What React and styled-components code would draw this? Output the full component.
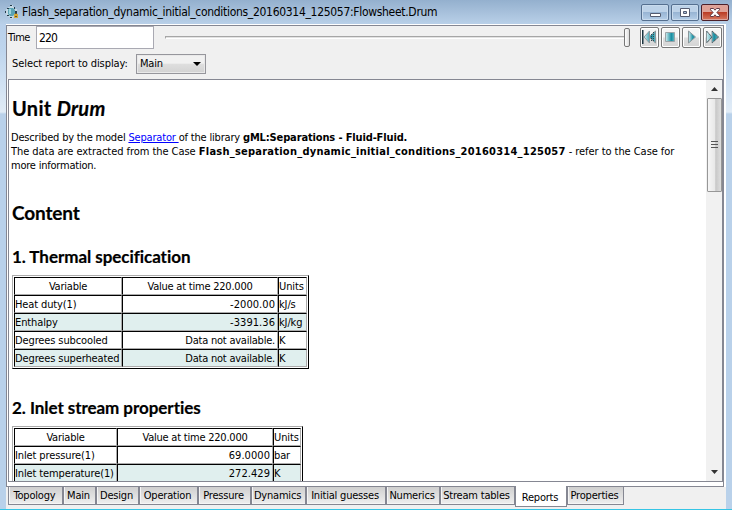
import React from "react";
import styled, { createGlobalStyle, css } from "styled-components";

const LINE = "#858792";

const GlobalStyle = createGlobalStyle`
  * { box-sizing: border-box; }
  body {
    margin: 0;
    overflow: hidden;
    color: #000;
    font: 11px/14px "DejaVu Sans Condensed", "DejaVu Sans", sans-serif;
    letter-spacing: -0.22px;
  }
`;

const Window = styled.main`
  width: 732px;
  height: 510px;
  display: flex;
  flex-direction: column;
  border-bottom: 1px solid #35c5e5;
  background: linear-gradient(#b9d0ea 0 25px, #bed5ed 50px, #e1ecf7 112px, #b9d1ea 114px, #b9d1ea);
`;

const TitleBar = styled.header`
  flex: 0 0 24px;
  display: flex;
  align-items: center;
  padding-left: 5px;
  padding-right: 3px;
  background: linear-gradient(#94b0ce, #b9d0e8);
`;

const Title = styled.h1`
  flex: 1;
  margin: 0 0 0 3px;
  font-size: 12px;
  font-weight: 400;
  line-height: 16px;
  letter-spacing: -0.3px;
  white-space: nowrap;
`;

const WindowButtons = styled.div`
  display: flex;
  gap: 2px;
  height: 17px;
`;

const WindowButton = styled.button`
  width: 28px;
  height: 17px;
  padding: 0;
  border: 1px solid ${(p) => (p.$close ? "#4c2029" : "#556f8f")};
  border-radius: 2px;
  box-shadow: inset 0 0 0 1px ${(p) => (p.$close ? "#dca49c" : "#c9dbed")};
  background: ${(p) =>
    p.$close
      ? "linear-gradient(#dfa196 0 45%, #bb3d26 50%, #d77961)"
      : "linear-gradient(#bdd2e8 0 45%, #98b5d4 50%, #b5cee8)"};
  svg { display: block; }
`;

const Body = styled.section`
  flex: 1;
  margin: 0 6px;
  display: flex;
  flex-direction: column;
  background: #f0f0f0;
  border-top: 1px solid #fff;
`;

const Pane = styled.div`
  width: 718px;
  height: 462px;
  display: flex;
  flex-direction: column;
  border: 1px solid ${LINE};
  box-shadow: 2px 0 #fff;
  background: #f0f0f0;
`;

const TimeRow = styled.div`
  flex: 0 0 23px;
  display: flex;
  padding-left: 1px;
`;

const TimeLabel = styled.label`
  width: 28px;
  line-height: 23px;
  letter-spacing: -0.6px;
`;

const TimeInput = styled.input`
  width: 118px;
  height: 23px;
  padding: 0 2px;
  border: 1px solid #a9a9b2;
  background: #fff;
  font: 12px "DejaVu Sans Condensed", sans-serif;
  letter-spacing: -0.9px;
`;

const Slider = styled.div`
  width: 465px;
  height: 20px;
  margin: 1px 10px 0 11px;
  display: flex;
  align-items: center;
`;

const Track = styled.div`
  flex: 1;
  height: 3px;
  margin-top: 1px;
  border-top: 1px solid #a6a6a6;
  border-left: 1px solid #a6a6a6;
  border-bottom: 1px solid #fff;
  background: #e2e2e2;
`;

const Thumb = styled.div`
  width: 6px;
  height: 19px;
  border: 1px solid #777;
  border-radius: 2px;
  background: linear-gradient(90deg, #fff, #ddd);
`;

const Transport = styled.div`
  display: flex;
  gap: 2px;
  padding-top: 1px;
`;

const TransportButton = styled.button`
  width: 19px;
  height: 21px;
  padding: 0;
  border: 1px solid #777;
  border-radius: 2px;
  box-shadow: inset 0 0 0 1px #fff;
  background: linear-gradient(#f5f5f5 0 45%, #dedede 55%, #d4d4d4);
  svg { display: block; }
`;

const SelectRow = styled.div`
  flex: 0 0 30px;
  display: flex;
  align-items: center;
  padding: 0 0 1px 5px;
`;

const SelectLabel = styled.span`
  width: 124px;
  padding-top: 1px;
  letter-spacing: -0.08px;
`;

const Combo = styled.div`
  width: 70px;
  height: 20px;
  padding: 1px 4px 0 3px;
  display: flex;
  align-items: center;
  justify-content: space-between;
  border: 1px solid #96969c;
  box-shadow: inset 0 0 0 1px #e9e9e9;
  background: linear-gradient(#f1f1f1 0 45%, #dedede 52%, #d2d2d2);
`;

const ReportFrame = styled.div`
  width: 715px;
  height: 403px;
  margin-left: 1px;
  display: flex;
  border: 1px solid ${LINE};
  background: #fff;
  box-shadow: -1px 0 #fff, 0 4px #fff, -1px 4px #fff;
`;

const Document = styled.article`
  flex: 1;
  padding-left: 2px;
  overflow: hidden;
`;

const UnitHeading = styled.h2`
  height: 51px;
  margin: 0;
  padding: 16px 0 0 1px;
  font: 700 20px/24px Lato, sans-serif;
  letter-spacing: 0.3px;
  -webkit-text-stroke: 0.2px;
`;

const ContentHeading = styled.h2`
  margin: 28px 0 0 1px;
  font: 700 19px/24px Lato, sans-serif;
  letter-spacing: -0.15px;
  -webkit-text-stroke: 0.2px;
`;

const SectionHeading = styled.h3`
  margin: ${(p) => p.$gap}px 0 6px 1px;
  font: 700 17px/24px Lato, sans-serif;
  letter-spacing: -0.05px;
  -webkit-text-stroke: 0.2px;
`;

const Paragraph = styled.p`
  margin: 0;
  white-space: nowrap;
  letter-spacing: ${(p) => p.$track}px;
`;

const Link = styled.a`
  color: #00f;
  text-decoration: underline;
`;

const Strong = styled.b`
  letter-spacing: ${(p) => p.$track}px;
`;

const Table = styled.div`
  width: max-content;
  margin-left: 1px;
  padding: 1px;
  border: 1px solid;
  border-color: #ababab #000 #000 #ababab;
`;

const Row = styled.div`
  display: grid;
  grid-template-columns: ${(p) => p.$columns};
  background: ${(p) => (p.$shaded ? "#e0efee" : "#fff")};
`;

const Cell = styled.div`
  height: 18px;
  line-height: 15px;
  padding-top: 1px;
  border: 1px solid;
  border-color: #000 #ababab #ababab #000;
  white-space: nowrap;
  letter-spacing: ${(p) => (p.$numeric ? 0.05 : p.$align ? -0.22 : -0.12)}px;
  text-align: ${(p) => p.$align || "left"};
  ${(p) => p.$align === "right" && css`padding-right: 2px;`}
`;

const Scrollbar = styled.div`
  width: 16px;
  display: flex;
  flex-direction: column;
  align-items: center;
  background: #f1f1f1;
`;

const Arrow = styled.div`
  height: 18px;
  display: flex;
  align-items: center;
`;

const ScrollThumb = styled.div`
  width: 15px;
  height: 94px;
  display: flex;
  align-items: center;
  justify-content: center;
  border: 1px solid #979797;
  border-radius: 1px;
  background: linear-gradient(90deg, #f6f6f6, #e9e9e9 50%, #c8c8c8 60%, #dedede);
`;

const ScrollSpace = styled.div`
  flex: 1;
`;

const Tabs = styled.nav`
  display: flex;
  align-items: flex-start;
  padding-left: 2px;
`;

const Tab = styled.button`
  width: ${(p) => p.$width}px;
  height: ${(p) => (p.$active ? 21 : 18)}px;
  margin-top: ${(p) => (p.$active ? -1 : 0)}px;
  padding: ${(p) => (p.$active ? "4px 2px 0 0" : "0 2px 0 0")};
  border: 1px solid ${LINE};
  border-top: 0;
  box-shadow: ${(p) => (p.$active ? "none" : "inset 1px -1px #f5f5f5")};
  background: ${(p) => (p.$active ? "#fff" : "linear-gradient(#cfcfcf, #d9d9d9 30%, #eee)")};
  color: #000;
  font: inherit;
  letter-spacing: -0.2px;
  white-space: nowrap;
`;

const AppIcon = () => (
  <svg width="14" height="14" viewBox="0 0 14 14">
    <path d="M1 4h2V2h2V0h3v2h2v2h2v5h-2v3H8v2H5v-2H3v-2H1V8H0V6h1z" fill="#c5d8e4" />
    <path d="M4 3h4l2 2v4l-2 2H5L3 9V5z" fill="#59a3b4" />
    <path d="M4 4h2v5H4z" fill="#9fd3dc" />
    <path d="M5 0h2v1H5zM2 3h2v1H2zM0 6h1v2H0zM2 10h2v1H2zM5 12h2v1H5zM9 2h1v2H9zM10 6h2v2h-2z" fill="#263c4b" />
    <path d="M9 9h4v4H9z" fill="#d5aa37" />
    <path d="M10 8h2v1h-2zM10 11h2v1h-2z" fill="#68532b" />
  </svg>
);

const windowGlyphs = {
  minimize: <path d="M8.5 8.5h10v3h-10z" fill="#fff" stroke="#555c70" />,
  maximize: (
    <g stroke="#555c70" fill="#fff">
      <path d="M8.5 3.5h9v8h-9z" />
      <path d="M11.5 6.5h3v2h-3z" fill="#a9c2de" />
    </g>
  ),
  close: (
    <path
      d="M8.5 3.5h3L13 5.2l1.5-1.7h3v1.3l-2.6 2.7 2.6 2.7v1.3h-3L13 9.8l-1.5 1.7h-3v-1.3l2.6-2.7-2.6-2.7z"
      fill="#fff"
      stroke="#633c48"
    />
  ),
};

const transportGlyphs = {
  first: (
    <g>
      <path d="M1 2h1.5v14H1z" fill="#19333f" />
      <path d="M8.5 3v12L3 9zM14.5 3v12L8 9z" fill="url(#teal)" stroke="#8c999f" />
      <path d="M10.5 6v7M12.5 4v10" stroke="#35474e" strokeDasharray="1 1" />
    </g>
  ),
  stop: <path d="M3.5 4.5h9v9h-9z" fill="url(#teal)" stroke="#9aa4a8" />,
  play: <path d="M5.5 3v12L12.5 9z" fill="url(#teal)" stroke="#8a969b" />,
  forward: (
    <g>
      <path d="M2.5 3v12L8 9zM8 3v12L14.5 9z" fill="url(#teal)" stroke="#8a969b" />
      <path d="M8 3 14.5 9 8 15M2.5 3 8 9l-5.5 6" fill="none" stroke="#35474e" strokeDasharray="1 1" />
    </g>
  ),
};

const TransportGlyph = ({ name }) => (
  <svg width="17" height="19" viewBox="0 0 17 19">
    <defs>
      <linearGradient id="teal">
        <stop stopColor="#d7f1f2" />
        <stop offset=".65" stopColor="#178da1" />
        <stop offset="1" stopColor="#64bac4" />
      </linearGradient>
    </defs>
    {transportGlyphs[name]}
  </svg>
);

const Triangle = ({ up, width = 7, color = "#333" }) => (
  <svg width={width} height="4" viewBox="0 0 8 4" preserveAspectRatio="none">
    <path d={up ? "M0 4 4 0l4 4z" : "M0 0h8L4 4z"} fill={color} />
  </svg>
);

const thermal = [
  ["Heat duty(1)", "-2000.00", "kJ/s"],
  ["Enthalpy", "-3391.36", "kJ/kg"],
  ["Degrees subcooled", "Data not available.", "K"],
  ["Degrees superheated", "Data not available.", "K"],
];

const inlet = [
  ["Inlet pressure(1)", "69.0000", "bar"],
  ["Inlet temperature(1)", "272.429", "K"],
];

const tabs = [
  ["Topology", 55],
  ["Main", 33],
  ["Design", 43],
  ["Operation", 59],
  ["Pressure", 53],
  ["Dynamics", 55],
  ["Initial guesses", 80],
  ["Numerics", 54],
  ["Stream tables", 75],
  ["Reports", 52],
  ["Properties", 57],
];

function ReportTable({ columns, rows }) {
  return (
    <Table>
      <Row $columns={columns}>
        <Cell $align="center">Variable</Cell>
        <Cell $align="center">Value at time 220.000</Cell>
        <Cell>Units</Cell>
      </Row>
      {rows.map(([name, value, unit], i) => (
        <Row key={name} $columns={columns} $shaded={i % 2 === 1}>
          <Cell>{name}</Cell>
          <Cell $align="right" $numeric={/\d/.test(value)}>{value}</Cell>
          <Cell>{unit}</Cell>
        </Row>
      ))}
    </Table>
  );
}

export default function App() {
  return (
    <Window>
      <GlobalStyle />
      <TitleBar>
        <AppIcon />
        <Title>Flash_separation_dynamic_initial_conditions_20160314_125057:Flowsheet.Drum</Title>
        <WindowButtons>
          {["minimize", "maximize", "close"].map((name) => (
            <WindowButton key={name} $close={name === "close"} aria-label={name}>
              <svg width="26" height="15" viewBox="0 0 26 15">{windowGlyphs[name]}</svg>
            </WindowButton>
          ))}
        </WindowButtons>
      </TitleBar>
      <Body>
        <Pane>
          <TimeRow>
            <TimeLabel htmlFor="time">Time</TimeLabel>
            <TimeInput id="time" defaultValue="220" />
            <Slider>
              <Track />
              <Thumb />
            </Slider>
            <Transport>
              {["first", "stop", "play", "forward"].map((name) => (
                <TransportButton key={name} aria-label={name}>
                  <TransportGlyph name={name} />
                </TransportButton>
              ))}
            </Transport>
          </TimeRow>
          <SelectRow>
            <SelectLabel>Select report to display:</SelectLabel>
            <Combo>
              Main
              <Triangle width={8} color="#000" />
            </Combo>
          </SelectRow>
          <ReportFrame>
            <Document>
              <UnitHeading>Unit <em>Drum</em></UnitHeading>
              <Paragraph $track={-0.18}>
                Described by the model <Link>Separator </Link>of the library{" "}
                <Strong $track={-0.14}>gML:Separations - Fluid-Fluid.</Strong>
              </Paragraph>
              <Paragraph $track={-0.05}>
                The data are extracted from the Case{" "}
                <Strong $track={0.24}>Flash_separation_dynamic_initial_conditions_20160314_125057</Strong> - refer to the Case for
              </Paragraph>
              <Paragraph $track={-0.22}>more information.</Paragraph>
              <ContentHeading>Content</ContentHeading>
              <SectionHeading $gap={20}>1. Thermal specification</SectionHeading>
              <ReportTable columns="108px 156px 29px" rows={thermal} />
              <SectionHeading $gap={27}>2. Inlet stream properties</SectionHeading>
              <ReportTable columns="103px 156px 28px" rows={inlet} />
            </Document>
            <Scrollbar>
              <Arrow><Triangle up /></Arrow>
              <ScrollThumb>
                <svg width="7" height="9" viewBox="0 0 7 9">
                  <path d="M0 .5h7M0 3.5h7M0 6.5h7" stroke="#555" />
                </svg>
              </ScrollThumb>
              <ScrollSpace />
              <Arrow><Triangle /></Arrow>
            </Scrollbar>
          </ReportFrame>
        </Pane>
        <Tabs>
          {tabs.map(([name, width]) => (
            <Tab key={name} $width={width} $active={name === "Reports"}>{name}</Tab>
          ))}
        </Tabs>
      </Body>
    </Window>
  );
}
